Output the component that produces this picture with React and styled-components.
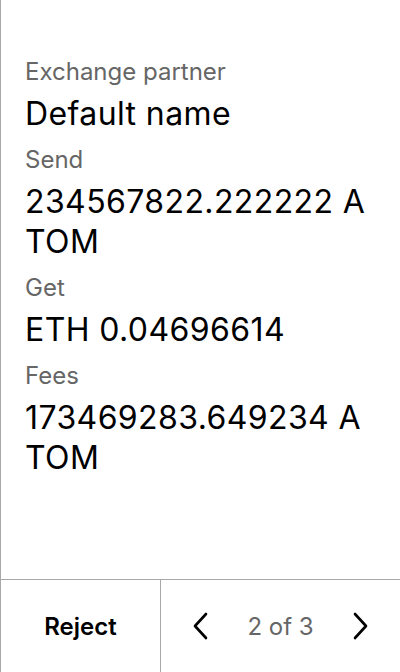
import styled, { createGlobalStyle } from "styled-components";

const GlobalStyle = createGlobalStyle`
  html, body {
    margin: 0;
    padding: 0;
    background: #ffffff;
  }

  body {
    font-family: Inter, "Noto Sans", sans-serif;
  }
`;

const fields = [
  { label: "Exchange partner", value: "Default name" },
  { label: "Send", value: "234567822.222222 ATOM" },
  { label: "Get", value: "ETH 0.04696614" },
  { label: "Fees", value: "173469283.649234 ATOM" },
];

const Chevron = ({ dir }) => (
  <svg width="24" height="28" viewBox="0 0 24 28" fill="none">
    <path
      d={dir === "left" ? "M17 2 L6 14 L17 26" : "M7 2 L18 14 L7 26"}
      stroke="#000"
      strokeWidth="2.6"
      strokeLinecap="round"
      strokeLinejoin="round"
    />
  </svg>
);

const App = () => {
  return (
    <>
      <GlobalStyle />
      <Screen>
        <Content>
          {fields.map((f) => (
            <Field key={f.label}>
              <Label>{f.label}</Label>
              <Value>{f.value}</Value>
            </Field>
          ))}
        </Content>
        <Footer>
          <RejectButton>Reject</RejectButton>
          <Pager>
            <NavButton>
              <Chevron dir="left" />
            </NavButton>
            <PageText>2 of 3</PageText>
            <NavButton>
              <Chevron dir="right" />
            </NavButton>
          </Pager>
        </Footer>
      </Screen>
    </>
  );
};

export default App;

const Screen = styled.div`
  width: 400px;
  height: 672px;
  box-sizing: border-box;

  display: flex;
  flex-direction: column;

  border-left: 1.5px solid #a8a8a8;
  background: #fff;
`;

const Content = styled.div`
  flex: 1;

  padding: 56px 30px 0 24px;

  display: flex;
  flex-direction: column;
`;

const Field = styled.div`
  display: flex;
  flex-direction: column;

  margin-bottom: 10px;
`;

const Label = styled.div`
  font-size: 24px;
  line-height: 32px;
  color: #666666;

  margin-bottom: 6px;
`;

const Value = styled.div`
  font-size: 32px;
  line-height: 40px;
  letter-spacing: 0.4px;
  color: #000;

  word-break: break-all;
`;

const Footer = styled.div`
  height: 92px;

  display: flex;

  border-top: 1.5px solid #a8a8a8;
`;

const RejectButton = styled.div`
  width: 159px;

  display: flex;
  align-items: center;
  justify-content: center;

  font-size: 24px;
  font-weight: 600;
  color: #000;

  border-right: 1.5px solid #a8a8a8;
`;

const Pager = styled.div`
  flex: 1;

  display: flex;
  align-items: center;
  justify-content: space-between;

  padding: 0 28px;
`;

const NavButton = styled.div`
  display: flex;
  align-items: center;
  justify-content: center;
`;

const PageText = styled.div`
  font-size: 24px;
  color: #666666;
`;
